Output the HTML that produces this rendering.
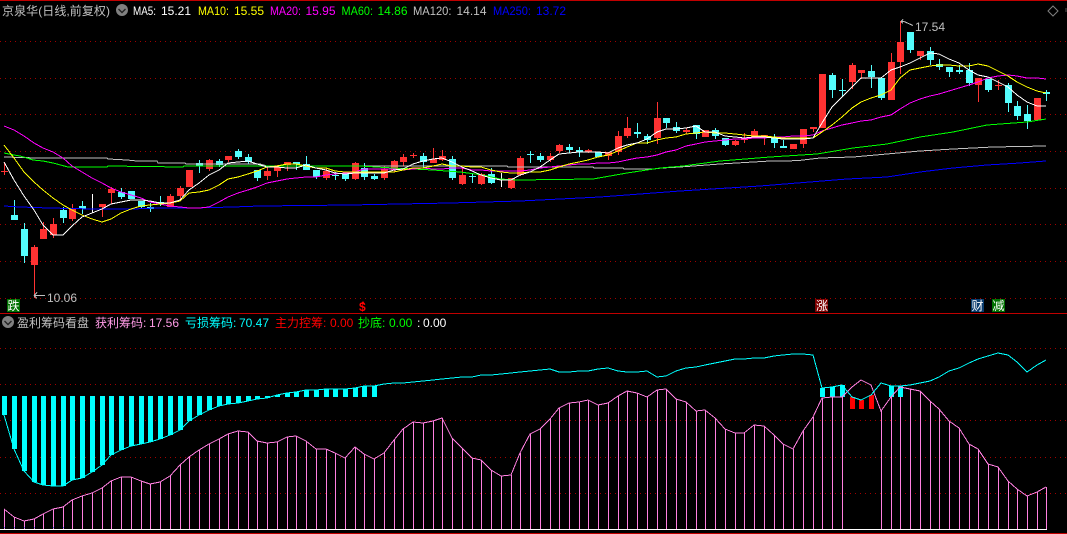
<!DOCTYPE html>
<html><head><meta charset="utf-8"><title>京泉华</title>
<style>
html,body{margin:0;padding:0;background:#000;width:1067px;height:534px;overflow:hidden}
svg{display:block}
text{font-family:"Liberation Sans","WenQuanYi Zen Hei","Noto Sans CJK SC",sans-serif;font-size:12px;letter-spacing:0}
</style></head><body>
<svg width="1067" height="534" viewBox="0 0 1067 534" xmlns="http://www.w3.org/2000/svg" fill="none">
<g shape-rendering="crispEdges">
<rect width="1067" height="534" fill="#000"/>
<g stroke="#a00000" stroke-dasharray="1 4">
<path d="M0 41.5H1067M0 78.5H1067M0 114.5H1067M0 151.5H1067M0 188.5H1067M0 224.5H1067M0 261.5H1067M0 298.5H1067M0 348.5H1067M0 384.5H1067M0 420.5H1067M0 457.5H1067M0 493.5H1067"/>
</g>
<rect x="0" y="0" width="1067" height="1" fill="#c00000"/>
<rect x="0" y="313" width="1067" height="1" fill="#c00000"/>
<rect x="0" y="533" width="1067" height="1" fill="#c00000"/>
<rect x="0" y="529" width="1047" height="1" fill="#fff"/>

<!-- red wicks -->
<path stroke="#ff3232" d="M4.5 162V175M34.5 245V298M43.5 222V239M53.5 218V238M72.5 204V221M102.5 204V217M111.5 187V204M170.5 194V207M180.5 186V199M209.5 159V171M228.5 156V162M267.5 167V180M277.5 165V177M287.5 162V171M326.5 168V180M355.5 162V180M384.5 166V180M394.5 160V172M403.5 154V166M413.5 153V158M433.5 148V163M442.5 150V161M462.5 168V185M481.5 173V185M511.5 178V189M520.5 156V176M550.5 153V162M559.5 144V153M588.5 149V153M608.5 152V160M618.5 131V155M627.5 117V138M657.5 102V144M686.5 128V134M705.5 130V137M735.5 140V146M744.5 133V143M754.5 129V138M764.5 135V145M793.5 144V149M803.5 129V148M813.5 127V132M852.5 63V89M861.5 70V79M891.5 53V100M900.5 21V74M920.5 51V60M978.5 78V102M998.5 80V90M1037.5 98V121"/>
<!-- red bodies -->
<path stroke="#ff3232" stroke-width="7" d="M4.5 171V172M34.5 247V265M43.5 229V239M53.5 224V235M72.5 209V219M102.5 204V207M111.5 189V193M170.5 196V207M180.5 188V196M189.5 170V187M209.5 160V169M228.5 156V160M267.5 171V176M277.5 167V171M287.5 162V165M326.5 171V178M355.5 163V179M384.5 169V178M394.5 161V170M403.5 157V162M413.5 155V156M433.5 159V163M442.5 156V160M462.5 175V184M481.5 174V184M511.5 178V188M520.5 158V175M550.5 156V160M559.5 145V151M588.5 150V152M608.5 152V156M618.5 136V152M627.5 128V136M657.5 118V138M686.5 130V132M705.5 130V137M735.5 141V145M744.5 138V140M754.5 131V137M764.5 135V137M793.5 144V149M803.5 129V144M813.5 127V129M822.5 74V128M852.5 65V82M861.5 70V73M891.5 62V100M900.5 42V62M920.5 51V56M978.5 78V85M998.5 85V86M1037.5 98V120"/>
<!-- cyan wicks -->
<path stroke="#54fcfc" d="M14.5 200V215M24.5 223V263M63.5 207V223M82.5 201V214M121.5 188V199M131.5 191V199M141.5 201V209M150.5 203V212M160.5 196V206M199.5 160V173M219.5 159V167M238.5 149V159M248.5 154V164M257.5 170V181M296.5 162V170M306.5 156V170M316.5 170V179M335.5 172V180M345.5 173V181M364.5 163V180M374.5 174V180M423.5 153V168M452.5 156V180M472.5 173V183M491.5 168V184M530.5 151V163M540.5 153V162M569.5 144V153M579.5 147V157M598.5 152V157M637.5 123V138M647.5 134V144M666.5 118V128M676.5 122V133M696.5 125V139M715.5 128V139M725.5 138V146M774.5 134V148M783.5 140V148M832.5 73V98M842.5 79V96M871.5 65V88M881.5 78V100M910.5 32V53M930.5 47V65M939.5 59V70M949.5 67V77M959.5 65V74M969.5 63V86M988.5 79V92M1008.5 83V112M1017.5 101V120M1027.5 105V129M1046.5 90V101"/>
<!-- cyan bodies -->
<path stroke="#54fcfc" stroke-width="7" d="M14.5 215V220M24.5 229V256M63.5 210V218M82.5 206V209M121.5 192V197M131.5 191V199M141.5 201V207M150.5 207V209M160.5 202V204M199.5 163V166M219.5 161V165M238.5 151V157M248.5 157V162M257.5 170V178M296.5 162V164M306.5 164V170M316.5 170V177M335.5 175V176M345.5 173V179M364.5 168V177M374.5 176V179M423.5 156V162M452.5 159V178M472.5 176V177M491.5 174V183M530.5 154V155M540.5 156V160M569.5 147V150M579.5 150V152M598.5 152V157M637.5 132V134M647.5 136V140M666.5 118V123M676.5 127V131M696.5 125V134M715.5 130V136M725.5 138V145M774.5 137V143M783.5 146V148M832.5 75V90M842.5 90V91M871.5 71V77M881.5 78V98M910.5 32V50M930.5 51V60M939.5 64V67M949.5 67V72M959.5 70V72M969.5 70V83M988.5 79V90M1008.5 85V103M1017.5 106V116M1027.5 114V121M1046.5 92V94"/>
<!-- doji -->
<path stroke="#fff" d="M92.5 194V213M501.5 173V187"/>

<!-- MA250 -->
<polyline stroke="#0000ff" points="4,206 20,207 49,208 93,209 133,209 155,208 193,208 233,207 260,206 350,205 450,203 520,201 600,197 680,191 760,186 847,179 887,177 920,172 953,168 987,165 1020,163 1046,161"/>
<!-- MA120 -->
<polyline stroke="#c0c0c0" points="4,157 38,158 107,158 108,159 127,160 137,161 157,161 158,163 185,163 186,164 260,164 267,166 360,166 507,166 508,167 593,167 594,168 623,168 624,169 653,169 662,168 680,167 720,164 770,161 797,160.700 820,158 853,157 887,154 920,151 953,149 993,147 1046,146"/>
<!-- MA60 -->
<polyline stroke="#00ff00" points="4,153 14,155 20,156 27,158 33,160 43,161 53,163 68,167 107,167 108,166 183,167 184,166 360,166 393,168 433,170 460,172 483,175 500,179 517,180 593,179 627,173 660,168 683,166 720,161 770,157 817,154 853,148 887,144 920,137 953,132 987,125 1027,122 1046,119"/>
<!-- MA20 -->
<polyline stroke="#ff00ff" points="4,126 14,130 24,136 34,143 43,148 53,152 63,158 72,166 82,172 92,178 102,183 111,188 121,192 131,195 141,198 150,202 160,204 170,206 180,207 189,208 199,208 209,207 219,202 228,197 238,193 248,190 257,187 267,183 277,181 287,179 296,178 306,177 316,177 326,175 335,174 345,173 355,172 364,169 374,169 384,169 394,169 403,170 413,169 423,168 433,169 442,169 452,168 462,168 472,170 481,170 491,171 501,171 511,171 520,171 530,170 540,168 550,167 559,166 569,165 579,164 588,164 598,163 608,163 618,162 627,160 637,158 647,157 657,155 666,152 676,150 686,146 696,144 705,142 715,141 725,140 735,139 744,139 754,138 764,138 774,137 783,137 793,136 803,136 813,135 822,131 832,128 842,125 852,123 861,121 871,120 881,117 891,115 900,109 910,103 920,99 930,96 939,94 949,91 959,88 969,85 978,82 988,78 998,76 1008,75 1017,76 1027,78 1037,78 1046,79"/>
<!-- MA10 -->
<polyline stroke="#ffff00" points="4,145 14,158 24,172 34,182 43,190 53,198 63,205 72,210 82,215 92,219 102,222 111,219 121,213 131,209 141,206 150,205 160,204 170,203 180,201 189,193 199,192 209,190 219,185 228,179 238,177 248,174 257,171 267,167 277,166 287,164 296,164 306,166 316,168 326,168 335,171 345,172 355,172 364,172 374,172 384,172 394,172 403,170 413,168 423,168 433,166 442,164 452,166 462,166 472,167 481,167 491,170 501,172 511,173 520,173 530,172 540,172 550,170 559,167 569,164 579,162 588,160 598,157 608,155 618,151 627,147 637,143 647,143 657,140 666,138 676,137 686,134 696,133 705,132 715,133 725,133 735,134 744,135 754,136 764,136 774,137 783,138 793,138 803,138 813,138 822,132 832,125 842,117 852,108 861,102 871,98 881,95 891,90 900,78 910,70 920,68 930,66 939,65 949,65 959,66 969,66 978,64 988,66 998,71 1008,76 1017,82 1027,87 1037,91 1046,93"/>
<!-- MA5 -->
<polyline stroke="#ffffff" points="4,162 14,180 24,196 34,210 43,225 53,235 63,235 72,226 82,217 92,213 102,209 111,204 121,202 131,200 141,200 150,201 160,203 170,203 180,200 189,190 199,183 209,175 219,170 228,163 238,162 248,161 257,164 267,167 277,167 287,168 296,168 306,165 316,168 326,170 335,173 345,174 355,173 364,173 374,173 384,173 394,170 403,169 413,164 423,161 433,159 442,158 452,162 462,167 472,171 481,175 491,178 501,180 511,180 520,175 530,172 540,167 550,160 559,154 569,153 579,152 588,152 598,152 608,153 618,148 627,145 637,143 647,139 657,132 666,129 676,129 686,128 696,126 705,132 715,132 725,136 735,137 744,138 754,137 764,137 774,138 783,139 793,139 803,139 813,138 822,123 832,107 842,97 852,87 861,78 871,78 881,78 891,70 900,67 910,63 920,58 930,53 939,54 949,59 959,63 969,70 978,75 988,77 998,82 1008,87 1017,95 1027,102 1037,106 1046,106"/>

<!-- lower panel: pink bars -->
<path stroke="#ff80e0" d="M4.500 509V529M14.500 517V529M24.500 521V529M34.500 519V529M43.500 514V529M53.500 509V529M63.500 507V529M72.500 500V529M82.500 496V529M92.500 493V529M102.500 488V529M111.500 481V529M121.500 477V529M131.500 477V529M141.500 481V529M150.500 484V529M160.500 482V529M170.500 476V529M180.500 465V529M189.500 457V529M199.500 450V529M209.500 444V529M219.500 439V529M228.500 434V529M238.500 431V529M248.500 432V529M257.500 441V529M267.500 443V529M277.500 442V529M287.500 437V529M296.500 436V529M306.500 441V529M316.500 449V529M326.500 449V529M335.500 453V529M345.500 458V529M355.500 447V529M364.500 454V529M374.500 459V529M384.500 453V529M394.500 440V529M403.500 429V529M413.500 422V529M423.500 423V529M433.500 421V529M442.500 418V529M452.500 438V529M462.500 448V529M472.500 458V529M481.500 460V529M491.500 470V529M501.500 476V529M511.500 475V529M520.500 453V529M530.500 434V529M540.500 429V529M550.500 419V529M559.500 408V529M569.500 403V529M579.500 402V529M588.500 400V529M598.500 405V529M608.500 403V529M618.500 396V529M627.500 391V529M637.500 393V529M647.500 397V529M657.500 390V529M666.500 389V529M676.500 399V529M686.500 402V529M696.500 411V529M705.500 410V529M715.500 418V529M725.500 429V529M735.500 433V529M744.500 433V529M754.500 425V529M764.500 426V529M774.500 435V529M783.500 444V529M793.500 449V529M803.500 431V529M813.500 417V529M822.500 398V529M832.500 397V529M842.500 397V529M881.500 411V529M891.500 397V529M900.500 387V529M910.500 389V529M920.500 391V529M930.500 401V529M939.500 409V529M949.500 421V529M959.500 428V529M969.500 444V529M978.500 449V529M988.500 464V529M998.500 467V529M1008.500 481V529M1017.500 489V529M1027.500 496V529M1037.500 492V529M1046.500 487V529"/>
<path stroke="#6060ff" d="M4.500 527V528M14.500 527V528M24.500 527V528M34.500 527V528M53.500 527V528M63.500 527V528"/>
<!-- cyan bars -->
<path stroke="#00ffff" stroke-width="5" d="M4.500 396V415M14.500 396V449M24.500 396V471M34.500 396V482M43.500 396V485M53.500 396V486M63.500 396V486M72.500 396V480M82.500 396V478M92.500 396V472M102.500 396V465M111.500 396V455M121.500 396V450M131.500 396V446M141.500 396V444M150.500 396V442M160.500 396V439M170.500 396V435M180.500 396V430M189.500 396V421M199.500 396V415M209.500 396V410M219.500 396V406M228.500 396V404M238.500 396V403M248.500 396V401M257.500 396V399M267.500 396V398M277.500 395V397M287.500 393V397M296.500 392V397M306.500 390V397M316.500 390V397M326.500 389V397M335.500 389V397M345.500 389V397M355.500 388V397M364.500 386V397M374.500 386V397M822.500 388V397M832.500 387V397M842.500 385V397M891.500 386V397M900.500 386V397"/>
<path stroke="#ff0000" stroke-width="5" d="M852.500 397V409M861.500 400V409M871.500 395V409"/>
<!-- pink curve -->
<polyline stroke="#ff80e0" points="4,509 14,517 24,521 34,519 43,514 53,509 63,507 72,500 82,496 92,493 102,488 111,481 121,477 131,477 141,481 150,484 160,482 170,476 180,465 189,457 199,450 209,444 219,439 228,434 238,431 248,432 257,441 267,443 277,442 287,437 296,436 306,441 316,449 326,449 335,453 345,458 355,447 364,454 374,459 384,453 394,440 403,429 413,422 423,423 433,421 442,418 452,438 462,448 472,458 481,460 491,470 501,476 511,475 520,453 530,434 540,429 550,419 559,408 569,403 579,402 588,400 598,405 608,403 618,396 627,391 637,393 647,397 657,390 666,389 676,399 686,402 696,411 705,410 715,418 725,429 735,433 744,433 754,425 764,426 774,435 783,444 793,449 803,431 813,417 822,398 832,397 842,397 852,387 861,380 871,385 881,411 891,397 900,387 910,389 920,391 930,401 939,409 949,421 959,428 969,444 978,449 988,464 998,467 1008,481 1017,489 1027,496 1037,492 1046,487"/>
<!-- cyan curve -->
<polyline stroke="#00ffff" points="4,415 14,449 24,471 34,482 43,485 53,486 63,486 72,480 82,478 92,472 102,465 111,455 121,450 131,446 141,444 150,442 160,439 170,435 180,430 189,421 199,415 209,410 219,406 228,404 238,403 248,401 257,399 267,398 277,395 287,393 296,392 306,390 316,390 326,389 335,389 345,389 355,388 364,386 374,386 384,384 394,383 403,383 413,382 423,381 433,380 442,379 452,378 462,377 472,377 481,375 491,375 501,374 511,373 520,372 530,371 540,370 550,369 559,372 569,372 579,371 588,371 598,369 608,368 618,371 627,372 637,372 647,371 657,377 666,376 676,371 686,368 696,367 705,365 715,363 725,361 735,359 744,359 754,358 764,358 774,356 783,355 793,354 803,354 813,355 822,388 832,387 842,385 852,397 861,400 871,395 881,383 891,386 900,386 910,385 920,383 930,381 939,377 949,371 959,368 969,363 978,359 988,356 998,353 1008,355 1017,362 1027,372 1037,365 1046,360"/>

<!-- extreme markers -->
<path stroke="#c0c0c0" d="M901 21.500H904M901 21.500L903 19.500M901 21.500L903 23.500M904 21.500L913 25.500"/>
<path stroke="#c0c0c0" d="M34 295.500H45M34 295.500L37 292.500M34 295.500L37 298.500"/>

<!-- badge squares -->
<rect x="7" y="299" width="13" height="13" fill="#007000"/>
<rect x="815" y="299" width="13" height="13" fill="#7d0000"/>
<rect x="971" y="299" width="13" height="13" fill="#0a3c6e"/>
<rect x="992" y="299" width="13" height="13" fill="#007000"/>
</g>

<!-- dropdown icons -->
<circle cx="122" cy="10" r="6" fill="#808080"/>
<path d="M118.500 9L122 12.500L125.500 9" stroke="#222" stroke-width="1.400"/>
<circle cx="8" cy="322" r="6" fill="#808080"/>
<path d="M4.500 321L8 324.500L11.500 321" stroke="#222" stroke-width="1.400"/>
<!-- diamond -->
<path d="M1053 6L1058 11L1053 16L1048 11Z" stroke="#808080"/>
<path d="M1066 8V12" stroke="#555"/>

<!-- header text -->
<text x="2" y="15" fill="#c0c0c0" textLength="108" lengthAdjust="spacing">京泉华(日线,前复权)</text>
<g fill="#ffffff"><text x="133" y="15" textLength="23" lengthAdjust="spacingAndGlyphs">MA5:</text><text x="161" y="15">15.21</text></g>
<g fill="#ffff00"><text x="198" y="15" textLength="31" lengthAdjust="spacingAndGlyphs">MA10:</text><text x="234" y="15">15.55</text></g>
<g fill="#ff00ff"><text x="270" y="15" textLength="31" lengthAdjust="spacingAndGlyphs">MA20:</text><text x="305.500" y="15">15.95</text></g>
<g fill="#00ff00"><text x="341.500" y="15" textLength="31.500" lengthAdjust="spacingAndGlyphs">MA60:</text><text x="377.500" y="15">14.86</text></g>
<g fill="#c0c0c0"><text x="413" y="15" textLength="38.500" lengthAdjust="spacingAndGlyphs">MA120:</text><text x="456.500" y="15">14.14</text></g>
<g fill="#0000ff"><text x="493" y="15" textLength="38" lengthAdjust="spacingAndGlyphs">MA250:</text><text x="536" y="15">13.72</text></g>

<text x="915" y="31" fill="#c0c0c0">17.54</text>
<text x="47" y="302" fill="#c0c0c0">10.06</text>

<text x="7.500" y="310" fill="#ffffff">跌</text>
<text x="816" y="310" fill="#ffffff">涨</text>
<text x="971.500" y="310" fill="#ffffff">财</text>
<text x="992.500" y="310" fill="#ffffff">减</text>
<text x="359" y="311" fill="#ff0000" font-size="11" font-weight="bold">$</text>
<path d="M363 301L361 304H365Z" fill="#ff0000"/>

<text x="17" y="327" fill="#c0c0c0">盈利筹码看盘</text>
<text x="95" y="327" fill="#ff9be6">获利筹码:</text>
<text x="149" y="327" fill="#ff9be6">17.56</text>
<text x="185" y="327" fill="#00ffff">亏损筹码:</text>
<text x="239" y="327" fill="#00ffff">70.47</text>
<text x="275" y="327" fill="#ff0000">主力控筹:</text>
<text x="330" y="327" fill="#ff0000">0.00</text>
<text x="358" y="327" fill="#00ff00">抄底:</text>
<text x="389" y="327" fill="#00ff00">0.00</text>
<text x="417" y="327" fill="#ffffff">:</text>
<text x="423" y="327" fill="#ffffff">0.00</text>
</svg>
</body></html>
